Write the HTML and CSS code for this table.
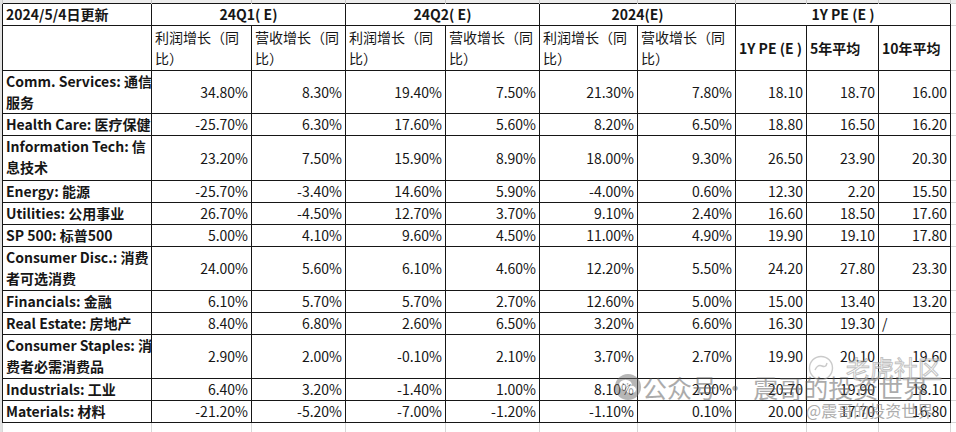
FILE: index.html
```html
<!DOCTYPE html>
<html lang="zh">
<head>
<meta charset="utf-8">
<title>2024 盈利预期</title>
<link rel="stylesheet" href="styles.css">
</head>
<body>
<div class="sheet">
<table class="t">
<colgroup>
<col class="w149"><col class="w100"><col class="w94"><col class="w100"><col class="w94"><col class="w98"><col class="w98"><col class="w71"><col class="w72"><col class="w72"><col class="w6">
</colgroup>
<tr class="hdr"><td></td><td></td><td></td><td></td><td></td><td></td><td></td><td></td><td></td><td></td><td></td></tr>
<tr class="h1">
<td class="lab b">2024/5/4日更新</td>
<td class="c b" colspan="2">24Q1( E)</td>
<td class="c b" colspan="2">24Q2( E)</td>
<td class="c b" colspan="2">2024(E)</td>
<td class="c b" colspan="3">1Y PE (E )</td>
<td class="x"></td>
</tr>
<tr class="h2">
<td></td>
<td class="sub">利润增长（同<br>比）</td>
<td class="sub">营收增长（同<br>比）</td>
<td class="sub">利润增长（同<br>比）</td>
<td class="sub">营收增长（同<br>比）</td>
<td class="sub">利润增长（同<br>比）</td>
<td class="sub">营收增长（同<br>比）</td>
<td class="pe b">1Y PE (E )</td>
<td class="pe b">5年平均</td>
<td class="pe b">10年平均</td>
<td class="x"></td>
</tr>
<tr class="r2 s"><td class="lab b">Comm. Services: 通信<br>服务</td><td class="n">34.80%</td><td class="n">8.30%</td><td class="n">19.40%</td><td class="n">7.50%</td><td class="n">21.30%</td><td class="n">7.80%</td><td class="p">18.10</td><td class="p">18.70</td><td class="p">16.00</td><td class="x"></td></tr>
<tr class="r1"><td class="lab b">Health Care: 医疗保健</td><td class="n">-25.70%</td><td class="n">6.30%</td><td class="n">17.60%</td><td class="n">5.60%</td><td class="n">8.20%</td><td class="n">6.50%</td><td class="p">18.80</td><td class="p">16.50</td><td class="p">16.20</td><td class="x"></td></tr>
<tr class="r2 l"><td class="lab b">Information Tech: 信<br>息技术</td><td class="n">23.20%</td><td class="n">7.50%</td><td class="n">15.90%</td><td class="n">8.90%</td><td class="n">18.00%</td><td class="n">9.30%</td><td class="p">26.50</td><td class="p">23.90</td><td class="p">20.30</td><td class="x"></td></tr>
<tr class="r1 s"><td class="lab b">Energy: 能源</td><td class="n">-25.70%</td><td class="n">-3.40%</td><td class="n">14.60%</td><td class="n">5.90%</td><td class="n">-4.00%</td><td class="n">0.60%</td><td class="p">12.30</td><td class="p">2.20</td><td class="p">15.50</td><td class="x"></td></tr>
<tr class="r1"><td class="lab b">Utilities: 公用事业</td><td class="n">26.70%</td><td class="n">-4.50%</td><td class="n">12.70%</td><td class="n">3.70%</td><td class="n">9.10%</td><td class="n">2.40%</td><td class="p">16.60</td><td class="p">18.50</td><td class="p">17.60</td><td class="x"></td></tr>
<tr class="r1"><td class="lab b">SP 500: 标普500</td><td class="n">5.00%</td><td class="n">4.10%</td><td class="n">9.60%</td><td class="n">4.50%</td><td class="n">11.00%</td><td class="n">4.90%</td><td class="p">19.90</td><td class="p">19.10</td><td class="p">17.80</td><td class="x"></td></tr>
<tr class="r2"><td class="lab b">Consumer Disc.: 消费<br>者可选消费</td><td class="n">24.00%</td><td class="n">5.60%</td><td class="n">6.10%</td><td class="n">4.60%</td><td class="n">12.20%</td><td class="n">5.50%</td><td class="p">24.20</td><td class="p">27.80</td><td class="p">23.30</td><td class="x"></td></tr>
<tr class="r1"><td class="lab b">Financials: 金融</td><td class="n">6.10%</td><td class="n">5.70%</td><td class="n">5.70%</td><td class="n">2.70%</td><td class="n">12.60%</td><td class="n">5.00%</td><td class="p">15.00</td><td class="p">13.40</td><td class="p">13.20</td><td class="x"></td></tr>
<tr class="r1"><td class="lab b">Real Estate: 房地产</td><td class="n">8.40%</td><td class="n">6.80%</td><td class="n">2.60%</td><td class="n">6.50%</td><td class="n">3.20%</td><td class="n">6.60%</td><td class="p">16.30</td><td class="p">19.30</td><td class="lab">/</td><td class="x"></td></tr>
<tr class="r2"><td class="lab b">Consumer Staples: 消<br>费者必需消费品</td><td class="n">2.90%</td><td class="n">2.00%</td><td class="n">-0.10%</td><td class="n">2.10%</td><td class="n">3.70%</td><td class="n">2.70%</td><td class="p">19.90</td><td class="p">20.10</td><td class="p">19.60</td><td class="x"></td></tr>
<tr class="r1"><td class="lab b">Industrials: 工业</td><td class="n">6.40%</td><td class="n">3.20%</td><td class="n">-1.40%</td><td class="n">1.00%</td><td class="n">8.10%</td><td class="n">2.00%</td><td class="p">20.70</td><td class="p">19.90</td><td class="p">18.10</td><td class="x"></td></tr>
<tr class="r1"><td class="lab b">Materials: 材料</td><td class="n">-21.20%</td><td class="n">-5.20%</td><td class="n">-7.00%</td><td class="n">-1.20%</td><td class="n">-1.10%</td><td class="n">0.10%</td><td class="p">20.00</td><td class="p">17.70</td><td class="p">16.80</td><td class="x"></td></tr>
<tr class="empty"><td></td><td></td><td></td><td></td><td></td><td></td><td></td><td></td><td></td><td></td><td></td></tr>
</table>

<div class="wm wm-main">
<svg class="wm-icon" viewBox="0 0 28 28" width="28" height="28" aria-hidden="true">
<circle cx="14" cy="14" r="13" fill="#6f6f6f"/>
<ellipse cx="11.5" cy="12" rx="6.5" ry="5.2" fill="#fff"/>
<ellipse cx="17" cy="16.5" rx="5.5" ry="4.4" fill="#fff" stroke="#6f6f6f" stroke-width="1"/>
<circle cx="9.3" cy="10.8" r="0.9" fill="#6f6f6f"/>
<circle cx="13.6" cy="10.8" r="0.9" fill="#6f6f6f"/>
</svg>
<span class="wm-text">公众号 · 震哥的投资世界</span>
</div>
<div class="wm wm-tiger">
<svg class="wm-ring" viewBox="0 0 26 26" width="26" height="26" aria-hidden="true">
<circle cx="13" cy="13" r="11.5" fill="none" stroke="#a8a8a8" stroke-width="1.4"/>
<path d="M7 15 q3 -6 7 -4 q4 2 5 -3" fill="none" stroke="#a8a8a8" stroke-width="1.4"/>
</svg>
<span class="wm-tiger-text">老虎社区</span>
</div>
<div class="wm wm-at">@震哥的投资世界</div>
</div>
</body>
</html>
```
FILE: styles.css
```css
html, body {
  margin: 0;
  padding: 0;
  background: #fff;
}
body {
  font-family: "Noto Sans CJK SC", "Noto Sans", sans-serif;
  font-size: 14px;
  color: #161616;
}
.sheet {
  position: relative;
  width: 956px;
  height: 432px;
  overflow: hidden;
  border-left: 2px solid #e2e2e2;
  box-sizing: border-box;
}
.t {
  border-collapse: collapse;
  table-layout: fixed;
  width: 954px;
}
.w149 { width: 149px; }
.w100 { width: 100px; }
.w94 { width: 94px; }
.w98 { width: 98px; }
.w71 { width: 71px; }
.w72 { width: 72px; }
.w6 { width: 6px; }

.t td {
  border: 1px solid #161616;
  padding: 0 3px;
  white-space: nowrap;
  overflow: hidden;
  line-height: 21px;
  vertical-align: middle;
}
.t .x {
  border-color: #d6d6d6;
  padding: 0;
}
.hdr td {
  height: 3px;
  padding: 0;
  background: #ececec;
  border: 1px solid #c9c9c9;
  border-bottom: 0 none;
  border-top: 0 none;
}
.h1 td { height: 21px; }
.h2 td { height: 44px; }
.r1 td { height: 21px; }
.r1.s td { height: 20px; }
.r2 td { height: 43px; }
.r2.s td { height: 42px; }
.r2.l td { height: 44px; }
.empty td {
  height: 12px;
  border-color: #d6d6d6;
}
.b { font-weight: 700; }
.lab { text-align: left; padding-left: 4px; }
.c { text-align: center; }
.r2 .lab { vertical-align: top; }
.sub {
  vertical-align: top;
  line-height: 23px;
}
.pe { text-align: left; }
.n { text-align: right; padding-right: 3px; }
.p { text-align: right; padding-right: 7px; }

.wm {
  position: absolute;
  pointer-events: none;
}
.wm-main {
  left: 612px;
  top: 372px;
  display: flex;
  align-items: center;
  gap: 0;
  opacity: 0.5;
}
.wm-icon { flex: none; }
.wm-text {
  font-size: 25px;
  line-height: 30px;
  color: #5a5a5a;
}
.wm-tiger {
  left: 806px;
  top: 354px;
  display: flex;
  align-items: center;
  gap: 12px;
  opacity: 0.6;
}
.wm-tiger-text {
  font-size: 24px;
  line-height: 28px;
  color: #fff;
  -webkit-text-stroke: 1px #9a9a9a;
}
.wm-at {
  left: 804px;
  top: 401px;
  font-size: 16px;
  line-height: 18px;
  color: #8a8a8a;
  opacity: 0.7;
}
```
